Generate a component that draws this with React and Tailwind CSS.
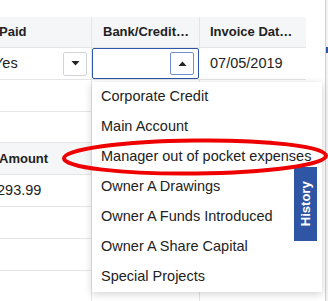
import React from "react";

const items = [
  "Corporate Credit",
  "Main Account",
  "Manager out of pocket expenses",
  "Owner A Drawings",
  "Owner A Funds Introduced",
  "Owner A Share Capital",
  "Special Projects",
];

function Row({ h, header, children, last }) {
  return (
    <div
      className={`flex ${h} ${header ? "bg-[#f5f6f8]" : "bg-white"} ${last ? "" : "border-b border-[#e4e5e7]"}`}
    >
      {children}
    </div>
  );
}

function Cell({ w, border = true, children, className = "" }) {
  return (
    <div
      className={`${w} ${border ? "border-r border-[#e4e5e7]" : ""} flex items-center overflow-hidden whitespace-nowrap ${className}`}
    >
      {children}
    </div>
  );
}

function Caret({ up }) {
  return (
    <svg width="9" height="5" viewBox="0 0 9 5">
      {up ? (
        <polygon points="0.5,5 4.5,0.5 8.5,5" fill="#222" />
      ) : (
        <polygon points="0.5,0 4.5,4.5 8.5,0" fill="#222" />
      )}
    </svg>
  );
}

function EmptyRow({ h, header, last }) {
  return (
    <Row h={h} header={header} last={last}>
      <Cell w="w-[92px]" />
      <Cell w="w-[108px]" />
      <Cell w="w-[106px]" border={false} />
    </Row>
  );
}

export default function App() {
  return (
    <div className="relative w-[328px] h-[301px] overflow-hidden bg-white font-['Liberation_Sans',Arial,sans-serif] text-[#222]">
      <div className="flex h-full">
        <div className="w-[325px] flex flex-col">
          <div className="h-[17px] shrink-0" />
          <div className="w-[306px] flex flex-col">
            <Row h="h-[31px]" header>
              <Cell w="w-[92px]" className="font-bold text-[13px]">
                <span className="-ml-[1px]">Paid</span>
              </Cell>
              <Cell w="w-[108px]" className="font-bold text-[13px] pl-[11px]">
                Bank/Credit…
              </Cell>
              <Cell w="w-[106px]" border={false} className="font-bold text-[13px] pl-[10px]">
                Invoice Dat…
              </Cell>
            </Row>
            <Row h="h-[32px]">
              <Cell w="w-[92px]" className="text-[14.5px] justify-between">
                <span className="-ml-[6px]">Yes</span>
                <div className="mr-[4px] w-[24px] h-[24px] border border-[#d2d4d8] rounded-[2px] flex items-center justify-center">
                  <Caret />
                </div>
              </Cell>
              <Cell w="w-[108px]" border={false} className="pr-[1px]">
                <div className="w-full h-full border border-[#2d56a8] rounded-[2px] flex items-center justify-end pr-[4px]">
                  <div className="w-[24px] h-[23px] border border-[#6f8fd2] rounded-[2px] flex items-center justify-center">
                    <Caret up />
                  </div>
                </div>
              </Cell>
              <Cell w="w-[106px]" border={false} className="text-[14.5px] pl-[10px]">
                07/05/2019
              </Cell>
            </Row>
            <EmptyRow h="h-[32px]" />
            <EmptyRow h="h-[31px]" />
            <Row h="h-[32px]" header>
              <Cell w="w-[92px]" className="font-bold text-[13px]">
                <span className="-ml-[1px]">Amount</span>
              </Cell>
              <Cell w="w-[108px]" />
              <Cell w="w-[106px]" border={false} />
            </Row>
            <Row h="h-[32px]">
              <Cell w="w-[92px]" className="text-[14.5px]">
                <span className="-ml-[3px]">293.99</span>
              </Cell>
              <Cell w="w-[108px]" />
              <Cell w="w-[106px]" border={false} />
            </Row>
            <EmptyRow h="h-[32px]" />
            <EmptyRow h="h-[32px]" />
            <EmptyRow h="h-[30px]" last />
          </div>
        </div>
        <div className="w-[1px] h-full bg-[#cfd0d3]" />
        <div className="w-[2px] h-full bg-[#f2f2f3] flex flex-col">
          <div className="h-[47px]" />
          <div className="h-[6px] bg-[#2f55a5]" />
        </div>
      </div>

      {/* Dropdown menu */}
      <div className="absolute left-[92px] top-[82px] w-[230px] bg-white shadow-[0_2px_8px_rgba(0,0,0,0.18)] flex flex-col">
        {items.map((it) => (
          <div key={it} className="h-[30px] flex items-center pl-[9px] text-[14.5px] whitespace-nowrap text-[#222]">
            {it}
          </div>
        ))}
      </div>

      {/* History tab */}
      <div className="absolute left-[294px] top-[167px] w-[23px] h-[74px] bg-[#2f55a5] flex items-center justify-center">
        <span className="-rotate-90 whitespace-nowrap text-white font-bold text-[13px]">History</span>
      </div>

      {/* Red annotation ellipse */}
      <svg className="absolute left-0 top-0 pointer-events-none" width="328" height="301" viewBox="0 0 328 301">
        <ellipse cx="195" cy="157" rx="131" ry="16.5" fill="none" stroke="#ee0000" strokeWidth="4" transform="rotate(-0.6 195 157)" />
      </svg>
    </div>
  );
}
